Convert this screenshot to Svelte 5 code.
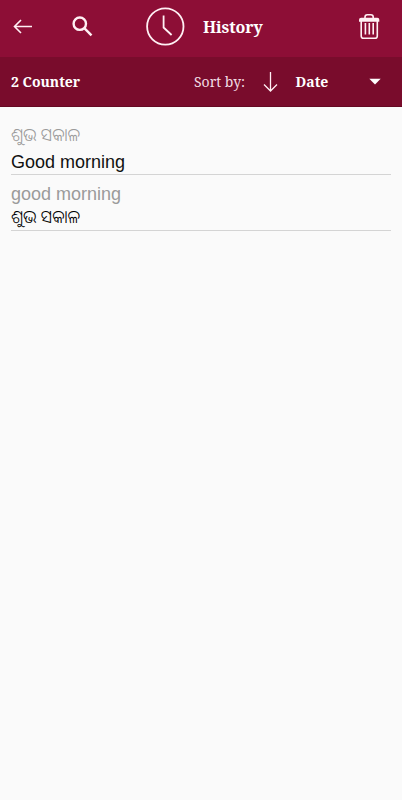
<script>
  let entries = [
    { source: 'ଶୁଭ ସକାଳ', target: 'Good morning', odiaFirst: true },
    { source: 'good morning', target: 'ଶୁଭ ସକାଳ', odiaFirst: false }
  ];
</script>

<div class="screen">
  <header class="toolbar">
    <button class="back" aria-label="Back">
      <svg width="20" height="16" viewBox="0 0 20 16">
        <path d="M19 7.5H1.5M8 1L1.5 7.5L8 14" />
      </svg>
    </button>
    <button class="search" aria-label="Search">
      <svg width="22" height="22" viewBox="0 0 22 22">
        <circle cx="7.8" cy="7.7" r="6.2" />
        <path d="M12.3 12.2L19.5 19.4" />
      </svg>
    </button>
    <svg class="clock" width="40" height="40" viewBox="0 0 40 40">
      <circle cx="20.3" cy="19.5" r="18.2" />
      <path d="M18.6 8.5V20.5L26.6 28" />
    </svg>
    <h1>History</h1>
    <button class="trash" aria-label="Delete all">
      <svg width="22" height="27" viewBox="0 0 22 27">
        <path class="handle" d="M6 5V4Q6 1.7 8.3 1.7H11.9Q14.2 1.7 14.2 4V5" />
        <path class="lid" d="M2.2 4.8H18.3Q20.3 4.8 20.3 6.8V8.8H0V6.8Q0 4.8 2.2 4.8Z" />
        <path d="M2.2 8V23Q2.2 25.3 4.5 25.3H16Q18.3 25.3 18.3 23V8" />
        <path d="M6.4 10V21.5M10.3 10V21.5M14.2 10V21.5" />
      </svg>
    </button>
  </header>

  <div class="sortbar">
    <span class="count">{entries.length} Counter</span>
    <span class="label">Sort by:</span>
    <svg class="down" width="16" height="21" viewBox="0 0 16 21">
      <path d="M8.5 1V20M2 13.5L8.5 20L15 13.5" />
    </svg>
    <span class="value">Date</span>
    <svg class="caret" width="12" height="7" viewBox="0 0 12 7">
      <path d="M.3 .8H11.7L6 6.6Z" />
    </svg>
  </div>

  <ul>
    {#each entries as entry}
      <li class:odia-first={entry.odiaFirst}>
        <span class="source" class:odia={entry.odiaFirst}>{entry.source}</span>
        <span class="target" class:odia={!entry.odiaFirst}>{entry.target}</span>
      </li>
    {/each}
  </ul>
</div>

<style>
  .screen {
    min-height: 800px;
    background: #fafafa;
    font-family: 'Noto Serif', 'DejaVu Serif', serif;
    color: #fff;
  }

  .toolbar,
  .sortbar {
    display: flex;
    align-items: center;
    box-sizing: border-box;
    white-space: nowrap;
  }

  .toolbar {
    height: 57px;
    padding: 0 21px 4px 13px;
    background: #8d0e36;
  }

  .sortbar {
    height: 50px;
    padding: 0 21px 0 11px;
    background: #790c2c;
    border-bottom: 1px solid #650923;
    font-size: 14px;
  }

  button {
    display: flex;
    padding: 0;
    border: none;
    background: none;
    cursor: pointer;
  }

  svg {
    flex: none;
    fill: none;
    stroke: #fff0f4;
    stroke-width: 1.6;
  }

  .search {
    margin-left: 39px;
  }

  .search svg {
    stroke-width: 2.4;
  }

  .clock {
    margin-left: 51px;
    stroke-width: 1.8;
  }

  h1 {
    width: 60px;
    margin: 0 0 0 18px;
    font-size: 16px;
    font-weight: 700;
    letter-spacing: -0.1px;
  }

  .trash {
    margin-left: auto;
  }

  .lid {
    fill: #fff0f4;
    stroke: none;
  }

  .count {
    width: 183px;
    font-weight: 700;
  }

  .label {
    width: 68px;
    color: #f2dce3;
  }

  .down {
    stroke-width: 1.3;
  }

  .value {
    margin-left: 17.5px;
    font-weight: 700;
  }

  .caret {
    margin-left: auto;
    fill: #fff;
    stroke: none;
  }

  ul {
    margin: 0;
    padding: 16px 11px 0;
    list-style: none;
    font-family: 'Liberation Sans', 'Noto Sans Oriya', sans-serif;
    font-size: 18px;
  }

  li {
    display: flex;
    flex-direction: column;
    box-sizing: border-box;
    height: 56px;
    padding-top: 7px;
    border-bottom: 1px solid #d4d4d4;
  }

  .odia-first {
    height: 52px;
    padding-top: 0;
  }

  span {
    display: block;
  }

  .source,
  .target {
    height: 24px;
    line-height: 24px;
  }

  .source {
    color: #9b9b9b;
  }

  .target {
    color: #111;
  }

  /* Odia glyphs run wider than the Latin ones */
  .odia {
    width: max-content;
    font-family: 'Noto Sans Oriya', 'Liberation Sans', sans-serif;
    font-weight: 300;
    line-height: 22px;
    transform: scaleX(0.92);
    transform-origin: left;
  }

  .target.odia {
    margin-top: -1px;
    color: #000;
  }

  .odia-first .target {
    margin-top: 3px;
  }
</style>
